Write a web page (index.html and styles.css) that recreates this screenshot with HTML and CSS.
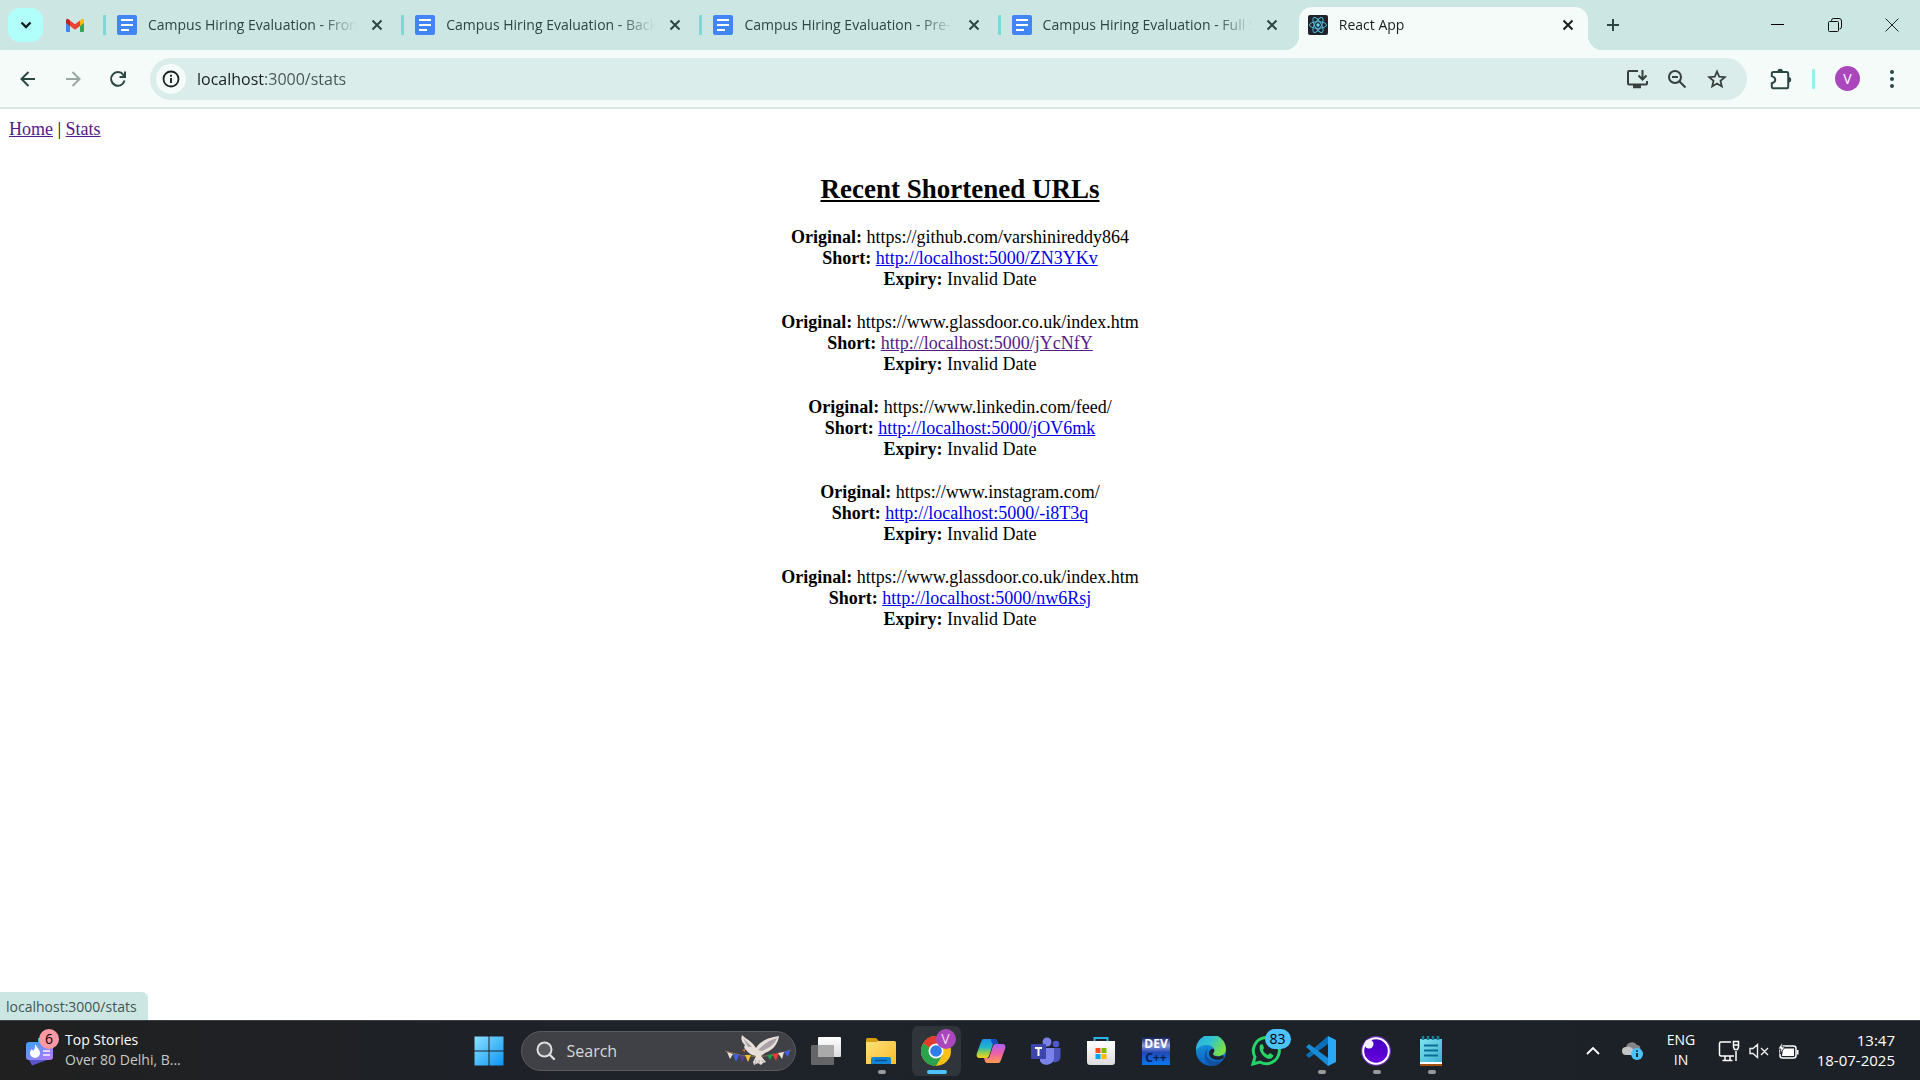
FILE: index.html
```html
<!DOCTYPE html>
<html lang="en">
<head>
<meta charset="utf-8">
<title>React App</title>
<link rel="stylesheet" href="styles.css">
</head>
<body>
<svg class="defs" width="0" height="0" aria-hidden="true">
  <defs>
    <symbol id="docs" viewBox="0 0 20 20">
      <rect width="20" height="20" rx="2" fill="#4285f4"/>
      <path d="M4 5h12M4 10h12M4 15h8" stroke="#fff" stroke-width="2"/>
    </symbol>
    <symbol id="cross" viewBox="0 0 12 12">
      <path d="M1.500 1.500l9 9M10.500 1.500l-9 9" stroke="currentColor" stroke-width="2" fill="none"/>
    </symbol>
    <linearGradient id="win" x1="0" y1="0" x2="1" y2="1"><stop offset="0" stop-color="#8be1ff"/><stop offset="1" stop-color="#0a95f5"/></linearGradient>
    <linearGradient id="folder" x1="0" y1="0" x2="1" y2="1"><stop offset="0" stop-color="#ffe07a"/><stop offset="1" stop-color="#f8bd2c"/></linearGradient>
    <linearGradient id="copA" x1="0" y1="0" x2="0" y2="1"><stop offset="0" stop-color="#1f8fe8"/><stop offset=".45" stop-color="#20b8c8"/><stop offset=".7" stop-color="#8fce50"/><stop offset="1" stop-color="#f2d11e"/></linearGradient>
    <linearGradient id="copB" x1="0" y1="0" x2="0" y2="1"><stop offset="0" stop-color="#a663f0"/><stop offset=".5" stop-color="#ee5fa5"/><stop offset="1" stop-color="#ff9c4f"/></linearGradient>
    <linearGradient id="edgeA" x1="0" y1="0" x2="1" y2=".5"><stop offset="0" stop-color="#2aa9ea"/><stop offset=".5" stop-color="#30c4d0"/><stop offset="1" stop-color="#78e046"/></linearGradient>
    <linearGradient id="edgeB" x1="0" y1="0" x2="0" y2="1"><stop offset="0" stop-color="#1ba0e4"/><stop offset="1" stop-color="#0c5fc0"/></linearGradient>
    <linearGradient id="news" x1="0" y1="0" x2="1" y2="1"><stop offset="0" stop-color="#3aa0ff"/><stop offset="1" stop-color="#b878f8"/></linearGradient>
    <linearGradient id="note" x1="0" y1="0" x2="1" y2="1"><stop offset="0" stop-color="#7fe2f2"/><stop offset="1" stop-color="#3fafd0"/></linearGradient>
    <linearGradient id="paper" x1="0" y1="0" x2="0" y2="1"><stop offset="0" stop-color="#fff"/><stop offset="1" stop-color="#dcdcdc"/></linearGradient>
    <linearGradient id="ring" x1="0" y1="0" x2="0" y2="1"><stop offset="0" stop-color="#4000bf"/><stop offset="1" stop-color="#6a00e0"/></linearGradient>
  </defs>
</svg>

<div class="window">
  <header class="tabstrip">
    <button class="tab-search" aria-label="Search tabs"><svg width="12" height="8" viewBox="0 0 12 8"><path d="M1.500 1.500L6 6l4.500-4.500" fill="none" stroke="#0b1f1d" stroke-width="2.300"/></svg></button>
    <button class="pinned" aria-label="Gmail"><svg width="20" height="16" viewBox="0 0 20 16"><path d="M1 4v10a1 1 0 0 0 1 1h3V6z" fill="#4285f4"/><path d="M19 4v10a1 1 0 0 1-1 1h-3V6z" fill="#34a853"/><path d="M15 3.500l1.500-1.200C17.700 1.300 19 2.200 19 3.500V6l-4 3z" fill="#fbbc04"/><path d="M5 3.500L3.500 2.300C2.300 1.300 1 2.200 1 3.500V6l4 3z" fill="#c5221f"/><path d="M5 3.500l5 3.800 5-3.800V9l-5 3.800L5 9z" fill="#ea4335"/></svg></button>
    <nav class="tabs" aria-label="Tabs">
      <div class="tab"><svg class="favicon"><use href="#docs"/></svg><span class="title">Campus Hiring Evaluation - Frontend</span><button class="close" aria-label="Close tab"><svg width="12" height="12"><use href="#cross"/></svg></button></div>
      <div class="tab"><svg class="favicon"><use href="#docs"/></svg><span class="title">Campus Hiring Evaluation - Backend</span><button class="close" aria-label="Close tab"><svg width="12" height="12"><use href="#cross"/></svg></button></div>
      <div class="tab"><svg class="favicon"><use href="#docs"/></svg><span class="title">Campus Hiring Evaluation - Pre-Test</span><button class="close" aria-label="Close tab"><svg width="12" height="12"><use href="#cross"/></svg></button></div>
      <div class="tab"><svg class="favicon"><use href="#docs"/></svg><span class="title">Campus Hiring Evaluation - Full Stack</span><button class="close" aria-label="Close tab"><svg width="12" height="12"><use href="#cross"/></svg></button></div>
      <div class="tab active"><svg class="favicon" viewBox="0 0 20 20"><rect width="20" height="20" rx="2" fill="#20232a"/><g fill="none" stroke="#53b9d6" stroke-width="1"><ellipse cx="10" cy="10" rx="8.500" ry="3.300"/><ellipse cx="10" cy="10" rx="8.500" ry="3.300" transform="rotate(60 10 10)"/><ellipse cx="10" cy="10" rx="8.500" ry="3.300" transform="rotate(120 10 10)"/></g><circle cx="10" cy="10" r="1.700" fill="#61dafb"/></svg><span class="title">React App</span><button class="close" aria-label="Close tab"><svg width="12" height="12"><use href="#cross"/></svg></button></div>
    </nav>
    <button class="new-tab" aria-label="New tab"><svg width="14" height="14" viewBox="0 0 14 14"><path d="M7 1v12M1 7h12" stroke="#2b4744" stroke-width="2"/></svg></button>
    <div class="controls">
      <button aria-label="Minimise"><svg width="14" height="14" viewBox="0 0 14 14"><path d="M0 6.500h13" stroke="#000"/></svg></button>
      <button aria-label="Restore"><svg width="14" height="14" viewBox="0 0 14 14" fill="none" stroke="#111"><rect x=".5" y="3.500" width="10" height="10" rx="1"/><path d="M3.500 3V2.500a2 2 0 0 1 2-2H11A2.500 2.500 0 0 1 13.500 3v6a2 2 0 0 1-2 2"/></svg></button>
      <button aria-label="Close"><svg width="14" height="14" viewBox="0 0 14 14"><path d="M.5.5l13 13M13.500.5l-13 13" stroke="#222"/></svg></button>
    </div>
  </header>

  <div class="toolbar">
    <button class="tool" aria-label="Back"><svg width="16" height="16" viewBox="0 0 16 16" fill="none" stroke="#2b4744" stroke-width="2"><path d="M15 8H2M8.500 1L1.500 8l7 7"/></svg></button>
    <button class="tool" aria-label="Forward" disabled><svg width="16" height="16" viewBox="0 0 16 16" fill="none" stroke="#9aa7a5" stroke-width="2"><path d="M1 8h13M7.500 1l7 7-7 7"/></svg></button>
    <button class="tool" aria-label="Reload"><svg width="18" height="18" viewBox="0 0 18 18" fill="none" stroke="#2b4744" stroke-width="2"><path d="M15.500 10.500A6.800 6.800 0 1 1 14.300 4.800L15.500 6.500M16 1.500V7h-5.500"/></svg></button>
    <div class="omnibox">
      <button class="site-info" aria-label="View site information"><svg width="18" height="18" viewBox="0 0 18 18"><circle cx="9" cy="9" r="7.500" fill="none" stroke="#1c2322" stroke-width="1.800"/><path d="M9 8v5M9 4.800v2" stroke="#1c2322" stroke-width="1.900"/></svg></button>
      <input class="address" type="text" value="localhost:3000/stats" aria-label="Address and search bar">
      <button class="action" aria-label="Install"><svg width="22" height="20" viewBox="0 0 22 20" fill="none" stroke="#37403f" stroke-width="2"><path d="M12 2H3a1 1 0 0 0-1 1v11.500a1 1 0 0 0 1 1h17a1 1 0 0 0 1-1V12M16.500 1v9M12.500 6.500l4 4 4-4"/><path d="M7 17.500h8" stroke-width="3.500"/></svg></button>
      <button class="action" aria-label="Zoom"><svg width="20" height="20" viewBox="0 0 20 20" fill="none" stroke="#37403f" stroke-width="2"><circle cx="8" cy="8" r="6"/><path d="M12.300 12.300L18.500 18.500M5 8h6"/></svg></button>
      <button class="action" aria-label="Bookmark"><svg width="20" height="20" viewBox="0 0 20 20" fill="none" stroke="#37403f" stroke-width="1.800"><path d="M10 2.500l2.200 5.200 5.600.5-4.300 3.700 1.300 5.500L10 14.500l-4.800 2.900 1.300-5.500L2.200 8.200l5.600-.5z"/></svg></button>
    </div>
    <button class="extensions" aria-label="Extensions"><svg width="22" height="22" viewBox="0 0 22 22"><path d="M3 4h14a1.200 1.200 0 0 1 1.200 1.200V19a1.200 1.200 0 0 1-1.200 1.200H3A1.200 1.200 0 0 1 1.800 19v-3.700c4.600-1.300 4.600-5.900 0-7.200V5.200A1.200 1.200 0 0 1 3 4z" fill="none" stroke="#2b4744" stroke-width="2"/><path d="M7.500 3.500a2.700 2.700 0 0 1 5.400 0zM18.500 9a2.700 2.700 0 0 1 0 5.400z" fill="#2b4744"/></svg></button>
    <span class="divider"></span>
    <button class="avatar" aria-label="Profile">V</button>
    <button class="menu" aria-label="Menu"><svg width="6" height="20" viewBox="0 0 6 20" fill="#2b4744"><circle cx="3" cy="3" r="2"/><circle cx="3" cy="10" r="2"/><circle cx="3" cy="17" r="2"/></svg></button>
  </div>

  <main class="page">
    <nav class="site-nav"><a class="visited" href="#home">Home</a> | <a class="visited" href="#stats">Stats</a></nav>
    <section class="stats">
      <h2>Recent Shortened URLs</h2>
      <ul>
        <li><b>Original:</b> https://github.com/varshinireddy864<br><b>Short:</b> <a href="#ZN3YKv">http://localhost:5000/ZN3YKv</a><br><b>Expiry:</b> Invalid Date</li>
        <li><b>Original:</b> https://www.glassdoor.co.uk/index.htm<br><b>Short:</b> <a class="visited" href="#jYcNfY">http://localhost:5000/jYcNfY</a><br><b>Expiry:</b> Invalid Date</li>
        <li><b>Original:</b> https://www.linkedin.com/feed/<br><b>Short:</b> <a href="#jOV6mk">http://localhost:5000/jOV6mk</a><br><b>Expiry:</b> Invalid Date</li>
        <li><b>Original:</b> https://www.instagram.com/<br><b>Short:</b> <a href="#-i8T3q">http://localhost:5000/-i8T3q</a><br><b>Expiry:</b> Invalid Date</li>
        <li><b>Original:</b> https://www.glassdoor.co.uk/index.htm<br><b>Short:</b> <a href="#nw6Rsj">http://localhost:5000/nw6Rsj</a><br><b>Expiry:</b> Invalid Date</li>
      </ul>
    </section>
    <div class="status">localhost:3000/stats</div>
  </main>

  <footer class="taskbar">
    <button class="widgets">
      <span class="news"><svg width="30" height="30" viewBox="0 0 30 30"><path d="M3 22l20-5-1 7-15 5.500z" fill="#5a55c8"/><path d="M13 2h12v12H13z" fill="#21b8d0"/><rect x="1" y="6" width="27" height="18" rx="3" fill="url(#news)"/><path d="M10 8c1 3 5 5 5 9a5 5 0 0 1-10 0c0-2 1-3 2-4l1 2c2-2 2-4 2-7z" fill="#fff"/><path d="M18 15h7M18 19h7" stroke="#e6d4ff" stroke-width="2"/></svg><span class="count">6</span></span>
      <span class="story"><span>Top Stories</span><span class="sub">Over 80 Delhi, B...</span></span>
    </button>

    <div class="apps">
      <button class="app" aria-label="Start"><svg width="30" height="30" viewBox="0 0 30 30" fill="url(#win)"><path d="M.5.500h14v14H.5zM15.500.500h14v14h-14zM.5 15.500h14v14H.5zM15.500 15.500h14v14h-14z"/></svg></button>
      <button class="search">
        <svg width="20" height="20" viewBox="0 0 20 20"><circle cx="8.500" cy="8.500" r="7" fill="#5a5b60" stroke="#dedede" stroke-width="2"/><path d="M13.500 13.500l4.500 4.500" stroke="#dedede" stroke-width="2.400" stroke-linecap="round"/></svg>
        <span>Search</span>
        <svg class="dove" width="66" height="32" viewBox="0 0 66 32"><path d="M0 16q33 12 66-1" fill="none" stroke="#8a6f55"/><path d="M2 17l6 2-3 5z" fill="#e8e0d2"/><path d="M8 19l6 1-3 7z" fill="#3b66e8"/><path d="M14 20l6 1-3 6z" fill="#5b3f8c"/><path d="M20 20l6 0-3 7z" fill="#f2c230"/><path d="M42 20l6-1-3 6z" fill="#18a04a"/><path d="M47 19l7-1-3 8z" fill="#e23c34"/><path d="M53 18l6-1-2 7z" fill="#e8e0d2"/><path d="M59 17l6-2-2 7z" fill="#3b5ff0"/><path d="M20 14c-1-1-1-3 0-4-4-3-4-7-3-10 4 4 11 7 14 13 3-5 9-10 23-12-1 8-6 14-14 17l-4 3 5 6-3 1-2 2-3-2-4 2-1-3 3-6c-6-1-8-4-11-7z" fill="#e6dfd8"/><path d="M33 15c5-5 11-10 19-12-2 6-8 10-15 13zM18 3l9 9-4 0z" fill="#aaa2a8"/><path d="M17 15l3-1v3z" fill="#dc6d38"/><path d="M31 25l-1 4M34 25v4M37 25l2 3" stroke="#aaa2a8"/></svg>
      </button>
      <button class="app" aria-label="Task view"><svg width="32" height="30" viewBox="0 0 32 30"><rect x="8" y="1" width="23" height="20" rx="1" fill="url(#paper)"/><rect x="1" y="9" width="23" height="20" rx="1" fill="#777" opacity=".8"/><path d="M8 9h16v12H8z" fill="#aaa"/></svg></button>
      <button class="app open" aria-label="File Explorer"><svg width="30" height="30" viewBox="0 0 30 30"><path d="M0 3.500A1.500 1.500 0 0 1 1.500 2H10l3 3-2 6H0z" fill="#d99b10"/><path d="M0 6h10l3-1h15.500A1.500 1.500 0 0 1 30 6.500V28H0z" fill="url(#folder)"/><path d="M5 28v-5a2 2 0 0 1 2-2h16a2 2 0 0 1 2 2v5z" fill="#1184d4"/><path d="M9 24.500h12" stroke="#0a4f91" stroke-width="1.500"/></svg></button>
      <button class="app open current" aria-label="Google Chrome"><svg width="30" height="30" viewBox="0 0 30 30"><circle cx="15" cy="15" r="15" fill="#fbc116"/><path d="M15 15L2 7.500A15 15 0 0 1 28 7.500H15z" fill="#e33b2e"/><path d="M2 7.500A15 15 0 0 0 15 30l6.500-11.200L15 15z" fill="#2ba24c"/><circle cx="15" cy="15" r="7.500" fill="#fff"/><circle cx="15" cy="15" r="5.800" fill="#2f7de9"/></svg><span class="badge profile">V</span></button>
      <button class="app" aria-label="Copilot"><svg width="30" height="30" viewBox="0 0 30 30"><path d="M8 3h10c3 0 3 2 4 5h-5l-4 12c-1 2-2 2-4 2H4c-3 0-4-2-3-5L5 6c1-2 1-3 3-3z" fill="url(#copA)"/><path d="M22 27H12c-3 0-3-2-4-5h5l4-12c1-2 2-2 4-2h5c3 0 4 2 3 5l-4 11c-1 2-1 3-3 3z" fill="url(#copB)"/><path d="M15 3h3c3 0 3 2 4 5h-4c-2 0-3-2-3-5z" fill="#164cc0"/></svg></button>
      <button class="app" aria-label="Teams"><svg width="30" height="30" viewBox="0 0 30 30"><circle cx="25" cy="8" r="3.300" fill="#5059c9"/><path d="M20 12h9.500v9a5.500 5.500 0 0 1-9 4z" fill="#4b53bc"/><circle cx="16" cy="6" r="4.500" fill="#7b83eb"/><path d="M9 12h14v9a7.500 7.500 0 0 1-14 4z" fill="#7b83eb"/><rect y="8" width="15" height="15" rx="1" fill="#3e45ad"/><path d="M4 12h7M7.500 12v8" stroke="#fff" stroke-width="2"/></svg></button>
      <button class="app" aria-label="Microsoft Store"><svg width="30" height="30" viewBox="0 0 30 30"><path d="M8.500 6V2h13v4" fill="none" stroke="#29b4ee" stroke-width="2"/><path d="M1 5h28v21a3 3 0 0 1-3 3H4a3 3 0 0 1-3-3z" fill="url(#paper)"/><path d="M9.500 12h5v5h-5z" fill="#f25022"/><path d="M15.500 12h5v5h-5z" fill="#7fba00"/><path d="M9.500 18h5v5h-5z" fill="#00a4ef"/><path d="M15.500 18h5v5h-5z" fill="#ffb900"/></svg></button>
      <button class="app" aria-label="Dev-C++"><span class="dev"><span>DEV</span><span class="cpp">C++</span></span></button>
      <button class="app" aria-label="Microsoft Edge"><svg width="30" height="30" viewBox="0 0 30 30"><circle cx="15" cy="15" r="15" fill="url(#edgeB)"/><path d="M0 14A15 15 0 0 1 30 13c0 5-4 7-8 7-3 0-5-1-5-2s2-2 1-5C16 8 6 7 0 14z" fill="url(#edgeA)"/><path d="M12 12c-5 9 3 17 15 12a15 15 0 0 1-9 6C9 29 6 18 12 12z" fill="#124f9e"/><path d="M18 13c1 3-1 4-1 5 0 2 5 4 10 1l1 3c-7 4-15 1-15-5 0-3 3-5 5-4z" fill="#1e2229"/></svg></button>
      <button class="app" aria-label="WhatsApp"><svg width="30" height="30" viewBox="0 0 30 30"><path d="M2 28l2-7A13 13 0 1 1 9 26z" fill="none" stroke="#25d366" stroke-width="3"/><path d="M9 9c1-1 3-1 3 0l1 3-1 2c1 3 3 4 5 5l2-2 3 2c1 1-1 4-4 4C13 22 7 16 9 9z" fill="#25d366"/></svg><span class="badge">83</span></button>
      <button class="app open" aria-label="Visual Studio Code"><svg width="30" height="30" viewBox="0 0 30 30"><path d="M22 0L0 19l3 3 19-14z" fill="#0b6fb8"/><path d="M22 30L0 11l3-3 19 14z" fill="#178bd6"/><path d="M22 0l8 4v22l-8 4z" fill="#2aa8f5"/></svg></button>
      <button class="app open" aria-label="Recorder"><svg width="30" height="30" viewBox="0 0 30 30"><circle cx="15" cy="15" r="14" fill="url(#ring)" stroke="#6b32b8" stroke-width="2"/><circle cx="15" cy="15" r="12.800" fill="none" stroke="#fff" stroke-width="2"/><circle cx="8" cy="8" r="4.500" fill="#f4efff"/></svg></button>
      <button class="app open" aria-label="Notepad"><svg width="30" height="30" viewBox="0 0 30 30"><path d="M4 27h22v3H4z" fill="#a65312"/><path d="M4 24h22v4H4z" fill="#fff"/><path d="M4 3h22v23H4z" fill="url(#note)"/><path d="M8 9.500h14M8 14.500h14M8 19.500h14" stroke="#0a6f94" stroke-width="2"/><path d="M7 0v4M12 0v4M17 0v4M22 0v4" stroke="#17809c" stroke-width="2.500"/></svg></button>
    </div>

    <div class="tray">
      <button class="chevron" aria-label="Show hidden icons"><svg width="14" height="9" viewBox="0 0 14 9"><path d="M1 8l6-6 6 6" fill="none" stroke="#fff" stroke-width="1.800"/></svg></button>
      <button class="cloud" aria-label="OneDrive"><svg width="22" height="20" viewBox="0 0 22 20"><path d="M4 7a6 6 0 0 1 11-3c3 0 4 3 3 6H7z" fill="#858585"/><path d="M4 14a4 4 0 0 1 0-8c4-1 6 1 7 2l5 6z" fill="#c4c4c4"/><circle cx="15" cy="13" r="6" fill="#4cc2ff"/><path d="M15 12v4M15 9.200v1.600" stroke="#102030" stroke-width="1.800"/></svg></button>
      <button class="lang"><span>ENG</span><span>IN</span></button>
      <button class="system" aria-label="Network, sound, battery">
        <svg width="22" height="22" viewBox="0 0 22 22" fill="none" stroke="#fff" stroke-width="1.500"><path d="M13 2H3a1.500 1.500 0 0 0-1.500 1.500v11A1.500 1.500 0 0 0 3 16h13M7 16v4M12 16v4M4.500 20.500h10M18 11v10M15.500 1.500h5V7l-1 2.500h-3l-1-2.500zM15.500 5h5"/></svg>
        <svg width="20" height="16" viewBox="0 0 20 16" fill="none" stroke="#eee" stroke-width="1.400"><path d="M1 5.500h3L8.500 1.500v13L4 10.500H1zM12 5l7 7M19 5l-7 7"/></svg>
        <svg width="21" height="18" viewBox="0 0 21 18"><rect x="2" y="4" width="16" height="12" rx="2.500" fill="none" stroke="#fff" stroke-width="1.500"/><path d="M19 8h1.500v4.500H19z" fill="#fff"/><path d="M5 6.500h11V14H4z" fill="#fff"/><path d="M4.500 0L0 7h3l-1 5 5-7H4z" fill="#fff" stroke="#1c2127" stroke-width=".8"/></svg>
      </button>
      <button class="clock"><span>13:47</span><span>18-07-2025</span></button>
    </div>
  </footer>
</div>
</body>
</html>
```
FILE: styles.css
```css
* {
  box-sizing: border-box;
}

body {
  margin: 0;
  font-family: "Segoe UI", "Open Sans", sans-serif;
  font-size: 14px;
}

button {
  padding: 0;
  border: 0;
  background: none;
  color: inherit;
  font: inherit;
  display: flex;
  align-items: center;
  justify-content: center;
  flex: none;
}

svg {
  display: block;
  flex: none;
}

.defs {
  position: absolute;
}

.window {
  display: flex;
  flex-direction: column;
  min-height: 100vh;
}

/* Tab strip */
.tabstrip {
  display: flex;
  align-items: center;
  height: 50px;
  padding-left: 8px;
  background: #cce7e3;
  color: #2b4744;
}

.tab-search {
  width: 35px;
  height: 34px;
  border-radius: 12px;
  background: #b0fffa;
}

.pinned {
  width: 60px;
  height: 34px;
  padding-left: 4px;
}

.tabs {
  display: flex;
  flex: 0 1 1485px;
  min-width: 0;
  align-self: stretch;
  align-items: center;
}

.tab {
  display: flex;
  align-items: center;
  flex: 1 1 0;
  min-width: 0;
  height: 20px;
  padding: 0 14px 0 11px;
  border-left: 3px solid #78dbd3;
  border-radius: 1px;
}

.favicon {
  width: 20px;
  height: 20px;
}

.title {
  flex: 1;
  min-width: 0;
  margin-left: 11px;
  line-height: 22px;
  overflow: hidden;
  white-space: nowrap;
  mask-image: linear-gradient(to right, #000 calc(100% - 36px), transparent);
}

.close {
  width: 20px;
  height: 20px;
  margin-left: 10px;
}

.tab.active {
  position: relative;
  align-self: flex-end;
  flex-grow: 1;
  height: 43px;
  margin-left: 3px;
  padding: 0 10px 7px 9px;
  border: 0;
  border-radius: 13px 13px 0 0;
  background: #f4fbf9;
  color: #17201f;
}

.tab.active::before,
.tab.active::after {
  content: "";
  position: absolute;
  bottom: 0;
  width: 14px;
  height: 14px;
}

.tab.active::before {
  right: 100%;
  background: radial-gradient(circle at 0 0, transparent 14px, #f4fbf9 14px);
}

.tab.active::after {
  left: 100%;
  background: radial-gradient(circle at 100% 0, transparent 14px, #f4fbf9 14px);
}

.new-tab {
  width: 36px;
  height: 36px;
  margin-left: 7px;
}

.controls {
  display: flex;
  align-self: stretch;
  margin-left: auto;
}

.controls button {
  width: 57px;
}

/* Toolbar */
.toolbar {
  display: flex;
  align-items: center;
  height: 59px;
  padding: 0 16px 0 5px;
  border-bottom: 2px solid #d9e6e3;
  background: #f4fbf9;
}

.tool {
  width: 45px;
  height: 36px;
}

.omnibox {
  display: flex;
  align-items: center;
  flex: 1;
  min-width: 0;
  height: 42px;
  margin-left: 10px;
  padding: 0 10px 0 6px;
  border-radius: 21px;
  background: #daedea;
}

.site-info {
  width: 30px;
  height: 30px;
  border-radius: 50%;
  background: #f4fbf9;
}

.address {
  flex: 1;
  min-width: 0;
  margin-left: 11px;
  padding: 0;
  border: 0;
  outline: 0;
  background: linear-gradient(to right, #17201f 68px, #465451 68px);
  background-clip: text;
  color: transparent;
  font: inherit;
  font-size: 16px;
  line-height: 24px;
}

.action {
  width: 40px;
  height: 36px;
}

.extensions {
  width: 36px;
  height: 36px;
  margin-left: 16px;
}

.divider {
  width: 3px;
  height: 20px;
  margin: 0 20px 0 13px;
  border-radius: 1px;
  background: #94f1ea;
}

.avatar {
  width: 25px;
  height: 25px;
  border-radius: 50%;
  background: #ab47bc;
  color: #fff;
}

.menu {
  width: 24px;
  height: 36px;
  margin-left: 20px;
}

/* Page */
.page {
  position: relative;
  flex: 1;
  padding: 10px 9px;
  background: #fff;
  color: #000;
  font-family: "Times New Roman", "Liberation Serif", serif;
  font-size: 18px;
  line-height: 21px;
}

.page a {
  color: #0000ee;
}

.page a.visited {
  color: #551a8b;
}

.stats {
  margin-top: 33px;
  text-align: center;
}

.stats h2 {
  margin: 0 0 22px;
  font-size: 27px;
  line-height: 32px;
  text-decoration: underline;
}

.stats ul {
  display: flex;
  flex-direction: column;
  gap: 22px;
  margin: 0;
  padding: 0;
  list-style: none;
}

.status {
  position: absolute;
  left: 0;
  bottom: 0;
  height: 28px;
  padding: 0 11px 0 6px;
  border-radius: 0 6px 0 0;
  background: #cce7e3;
  color: #465451;
  font-family: "Segoe UI", "Open Sans", sans-serif;
  font-size: 14px;
  line-height: 30px;
}

/* Taskbar */
.taskbar {
  display: grid;
  grid-template-columns: 1fr auto 1fr;
  height: 60px;
  border-top: 1px solid #3c4145;
  background: linear-gradient(to right, #202020, #1e2229 30%, #1c2127);
  color: #fff;
}

.widgets {
  justify-self: start;
  gap: 10px;
  padding-left: 25px;
}

.news {
  position: relative;
}

.count {
  position: absolute;
  left: 14px;
  top: -7px;
  width: 20px;
  height: 20px;
  border-radius: 50%;
  background: #ff99a4;
  color: #000;
  line-height: 20px;
}

.story,
.lang,
.clock {
  display: flex;
  flex-direction: column;
  padding-bottom: 2px;
  line-height: 20px;
}

.story {
  align-items: flex-start;
}

.sub {
  color: #c8c8c8;
}

.apps {
  display: flex;
  align-items: center;
}

.app {
  position: relative;
  width: 55px;
  height: 50px;
}

.open::after {
  content: "";
  position: absolute;
  left: 24px;
  bottom: 2px;
  width: 8px;
  height: 4px;
  border-radius: 2px;
  background: #9a9a9c;
}

.current {
  border: 2px solid #1e2229;
  border-width: 0 3px;
  border-radius: 8px;
  background: #30343b;
}

.current::after {
  left: 15px;
  width: 20px;
  background: #4cc2ff;
}

.search {
  justify-content: flex-start;
  width: 275px;
  height: 40px;
  margin: 0 3px 0 4px;
  padding: 0 4px 0 14px;
  border: 1px solid #5a5b5f;
  border-radius: 20px;
  background: #404146;
  color: #d8d8d8;
  font-size: 16px;
  gap: 11px;
}

.dove {
  margin-left: auto;
}

.badge {
  position: absolute;
  left: 26px;
  top: 3px;
  min-width: 26px;
  height: 20px;
  border-radius: 10px;
  background: #4cc2ff;
  color: #000;
  line-height: 20px;
}

.badge.profile {
  left: 24px;
  min-width: 20px;
  background: #ab47bc;
  color: #eddaf1;
}

.dev {
  display: flex;
  flex-direction: column;
  width: 28px;
  height: 28px;
  background: linear-gradient(#101b50, #8d9bd8 30%, #2348b8 55%, #0b78ee);
  color: #fff;
  font-size: 12px;
  font-weight: 700;
  line-height: 14px;
}

.cpp {
  color: #08204f;
}

.tray {
  display: flex;
  justify-self: end;
  padding-right: 25px;
}

.chevron,
.cloud {
  width: 40px;
}

.lang {
  width: 56px;
}

.system {
  gap: 9px;
  padding: 0 9px;
}

.clock {
  align-items: flex-end;
  width: 87px;
  font-size: 15px;
}
```
